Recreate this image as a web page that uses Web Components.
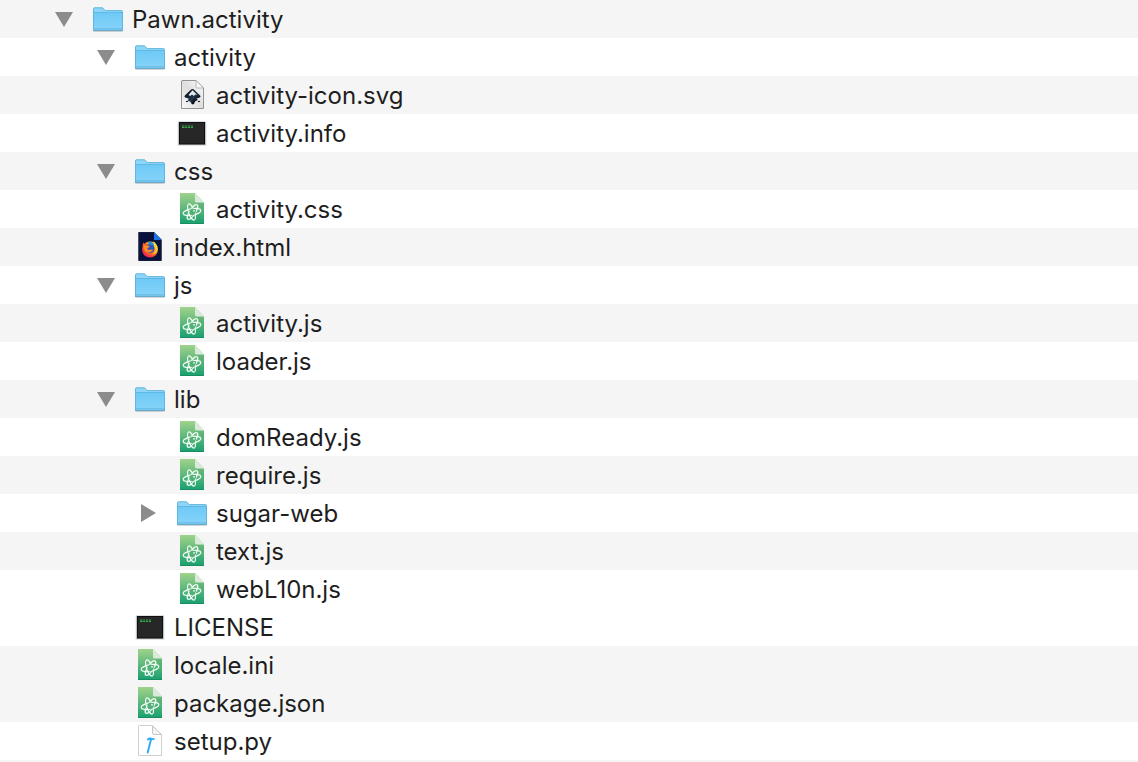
<!DOCTYPE html>
<html lang="en">
<head>
<meta charset="utf-8">
<meta name="viewport" content="width=device-width, initial-scale=1">
<title>Pawn.activity</title>
<style>
  html, body { margin: 0; background: #fff; }
  body { font-family: Inter, "Open Sans", "Liberation Sans", sans-serif; color: #1e1e1e; }
</style>
</head>
<body>
<file-tree>
  <tree-row level="0" kind="folder" state="open" shaded>Pawn.activity</tree-row>
  <tree-row level="1" kind="folder" state="open">activity</tree-row>
  <tree-row level="2" kind="inkscape" shaded>activity-icon.svg</tree-row>
  <tree-row level="2" kind="exec">activity.info</tree-row>
  <tree-row level="1" kind="folder" state="open" shaded>css</tree-row>
  <tree-row level="2" kind="atom">activity.css</tree-row>
  <tree-row level="1" kind="firefox" shaded>index.html</tree-row>
  <tree-row level="1" kind="folder" state="open">js</tree-row>
  <tree-row level="2" kind="atom" shaded>activity.js</tree-row>
  <tree-row level="2" kind="atom">loader.js</tree-row>
  <tree-row level="1" kind="folder" state="open" shaded>lib</tree-row>
  <tree-row level="2" kind="atom">domReady.js</tree-row>
  <tree-row level="2" kind="atom" shaded>require.js</tree-row>
  <tree-row level="2" kind="folder" state="closed">sugar-web</tree-row>
  <tree-row level="2" kind="atom" shaded>text.js</tree-row>
  <tree-row level="2" kind="atom">webL10n.js</tree-row>
  <tree-row level="1" kind="exec">LICENSE</tree-row>
  <tree-row level="1" kind="atom" shaded>locale.ini</tree-row>
  <tree-row level="1" kind="atom" shaded>package.json</tree-row>
  <tree-row level="1" kind="script">setup.py</tree-row>
</file-tree>

<script>
const ICONS = {
  folder: `
    <defs><linearGradient id="f" x1="0" y1="0" x2="0" y2="1"><stop offset="0" stop-color="#6fcaf6"/><stop offset="1" stop-color="#83d2f9"/></linearGradient></defs>
    <path d="M1.5 31.5h29" stroke="#000" stroke-opacity=".16"/>
    <path d="M1.5 30V8.8q0-1 1-1H10q.8 0 1.300.6l1.200 1.700q.4.500 1.200.500H29.500q1 0 1 1V30z" fill="#8fd5f7" stroke="#62b5dd"/>
    <path d="M2 13h28v15H2z" fill="url(#f)"/>
    <path d="M2 12.500h28" stroke="#5fb9e6"/>
    <path d="M2 28.500h28" stroke="#6cc0e9"/>
    <path d="M1 30.500h30" stroke="#65abd0"/>`,
  atom: `
    <defs><linearGradient id="a" x1="0" y1="0" x2="0" y2="1"><stop offset="0" stop-color="#9fd38b"/><stop offset=".5" stop-color="#5eb87b"/><stop offset="1" stop-color="#16a070"/></linearGradient></defs>
    <path d="M4 3h15l9 9.500V34H4z" fill="url(#a)"/>
    <path d="M4 33.500h24" stroke="#1b8b62"/>
    <path d="M19 12.500h9V21z" fill="#2a8055" opacity=".15"/>
    <path d="M19 3l9 9.500h-7.500q-1.500 0-1.500-1.500z" fill="#d9eadb"/>
    <g fill="none" stroke="#f2fbf5" stroke-width="1.200">
      <ellipse cx="16" cy="22" rx="9" ry="3.200" transform="rotate(-10 16 22)"/>
      <ellipse cx="15.500" cy="22" rx="8.500" ry="2.900" transform="rotate(70 15.500 22)"/>
      <ellipse cx="16.500" cy="22" rx="8.500" ry="2.900" transform="rotate(122 16.500 22)"/>
    </g>
    <path d="M13.500 20l2.500-1.500 3 .7 1 2.300-1.500 3-2.500 1-2.500-2z" fill="#52b077"/>
    <circle cx="18" cy="20.800" r=".9" fill="#f2fbf5"/>`,
  inkscape: `
    <defs><linearGradient id="p" x1="1" y1="0" x2="0" y2="1"><stop offset="0" stop-color="#fff"/><stop offset=".5" stop-color="#dedede"/><stop offset="1" stop-color="#f8f8f8"/></linearGradient>
    <linearGradient id="m" x1="0" y1="0" x2="1" y2="1"><stop offset="0" stop-color="#000"/><stop offset=".55" stop-color="#203650"/><stop offset=".8" stop-color="#000"/></linearGradient></defs>
    <path d="M6 4.500h14l7.500 7.500v20.500H5.500V5z" fill="url(#p)" stroke="#929292"/>
    <path d="M20 4.500V11q0 1 1 1h6.500z" fill="#fafafa" stroke="#a8a8a8" stroke-width=".8"/>
    <path d="M16.500 13q.9 0 1.600.7l6 5.800q1.200 1.300-.5 2l-3 .9q-.7.500.5.900 1.600.6-.2 1.300-1.800.3-2.100 1.500-.4 2.200-2 2.300-1.600-.1-2-2.200-.3-1.100-2.300-1.300-1.800-.6-.3-1.200 1.200-.6.100-1.100l-3-1q-1.600-.7-.4-2l6-5.900q.7-.7 1.600-.7z" fill="url(#m)"/>
    <path d="M16.500 14.200l4.500 4.600-1.900-.3-1.300 1.400-1.800-1.400-1.800 1.400-1.700-.8z" fill="#e8edf3"/>
    <path d="M10 25.500h2M22 25.500h2" stroke="#151515"/>`,
  exec: `
    <rect x="1.500" y="8" width="29" height="24" rx="1" fill="#000" opacity=".1"/>
    <rect x="2" y="7.500" width="28" height="23.500" fill="#b9c4c4"/>
    <rect x="3" y="8" width="26" height="22.500" fill="#101010"/>
    <rect x="4" y="9" width="24" height="20.500" fill="#272727"/>
    <path d="M6 12h2.500M6 13.500h2.500M9.200 12h2M9.200 13.500h2M12 12h2.200M12 13.500h2.200M15 12h2M15 13.500h2" fill="none" stroke="#36ad49" stroke-width="1.100"/>`,
  firefox: `
    <defs><radialGradient id="o" cx=".8" cy=".15" r="1"><stop offset="0" stop-color="#fff44f"/><stop offset=".3" stop-color="#ffbd1e"/><stop offset=".6" stop-color="#ff6d1e"/><stop offset="1" stop-color="#e8175c"/></radialGradient></defs>
    <path d="M4.500 4H20l7.500 7.500V33h-23z" fill="#07113b" />
    <path d="M5 4.500h14.500M5 4.500v28h22V12" fill="none" stroke="#171c37"/>
    <path d="M20 4l7.500 8H20z" fill="#1a76e8"/>
    <circle cx="16" cy="21.500" r="8" fill="url(#o)"/>
    <path d="M8.500 18l.6-3.500 2 1.800 2-.3-2 5z" fill="#f4512c"/>
    <circle cx="16" cy="20.500" r="4.600" fill="#3553b7"/>
    <path d="M14 14q3-.8 5 1l1.700 3-3.200-1.200-2.500-.3z" fill="#198fe2"/>
    <path d="M9.500 17.500q1.500-1 3.500 0l2.500.4-.7 1.600-1.700 1q.5 1.700 2.400 1.600l2.500-.7q1.300.2.600 1.100-2.600 3-6 1.700-3.500-2.200-3.100-6.700z" fill="#ff8a1d"/>
    <path d="M19 14q4 2.500 3 7.500-1 4-4.500 5 5-.1 6-5 .4-4-2.500-6.500l-1-1.500z" fill="#ffd72e"/>`,
  script: `
    <path d="M5 4h14l8.500 8.500V34h-23V4.500z" fill="#000" opacity=".07"/>
    <path d="M5.500 3.500H18.500l9 9v21h-23v-29q0-1 1-1z" fill="#fff" stroke="#cfcfcf"/>
    <path d="M18.500 4v7q0 1.500 1.500 1.500h7.500z" fill="#f5f5f5" stroke="#c8c8c8"/>
    <path d="M12.800 17q2-2 4.500-1.300l3.200.5.200 1.900-4.700-.2q-1.700-.1-2.800.6z" fill="#3aaef5"/>
    <path d="M17 17.500L13.700 30.500" stroke="#28aafa" stroke-width="1.900" stroke-linecap="round"/>`
};

class FileIcon extends HTMLElement {
  connectedCallback() {
    this.attachShadow({ mode: "open" }).innerHTML = `
      <style>
        :host { display: block; flex: none; width: 32px; height: 38px; }
        svg { display: block; width: 100%; height: 100%; }
      </style>
      <svg viewBox="0 0 32 38" aria-hidden="true">${ICONS[this.getAttribute("kind")]}</svg>`;
  }
}

class DisclosureButton extends HTMLElement {
  connectedCallback() {
    const open = this.getAttribute("state") === "open";
    this.attachShadow({ mode: "open" }).innerHTML = `
      <style>
        :host { display: block; }
        button { display: block; width: 20px; height: 38px; padding: 0; border: 0; background: none; }
        svg { display: block; width: 20px; height: 38px; fill: #8c8c8c; }
      </style>
      <button type="button" aria-label="${open ? "Collapse" : "Expand"}" aria-expanded="${open}">
        <svg viewBox="0 0 20 38" aria-hidden="true"><path d="${open ? "M1 12h18l-9 15z" : "M3 10l15 9-15 9z"}"/></svg>
      </button>`;
  }
}

class TreeRow extends HTMLElement {
  connectedCallback() {
    const state = this.getAttribute("state");
    const level = Number(this.getAttribute("level"));
    this.setAttribute("role", "treeitem");
    this.setAttribute("aria-level", level + 1);
    this.style.setProperty("--level", level);
    this.attachShadow({ mode: "open" }).innerHTML = `
      <style>
        :host { display: flex; align-items: flex-start; height: 38px; padding-left: calc(54px + 42px * var(--level)); background: #fff; }
        :host([shaded]) { background: #f5f5f5; }
        .toggle { flex: none; width: 20px; margin-right: 18px; }
        .label { margin-left: 8px; font-size: 24px; line-height: 40px; white-space: nowrap; }
      </style>
      <span class="toggle">${state ? `<disclosure-button state="${state}"></disclosure-button>` : ""}</span>
      <file-icon kind="${this.getAttribute("kind")}"></file-icon>
      <span class="label"><slot></slot></span>`;
  }
}

class FileTree extends HTMLElement {
  connectedCallback() {
    this.setAttribute("role", "tree");
    this.attachShadow({ mode: "open" }).innerHTML = `
      <style>
        :host { display: flex; flex-direction: column; min-height: 100vh; }
        .rest { flex: 1; min-height: 2px; background: #f5f5f5; }
      </style>
      <slot></slot>
      <div class="rest"></div>`;
  }
}

customElements.define("file-icon", FileIcon);
customElements.define("disclosure-button", DisclosureButton);
customElements.define("tree-row", TreeRow);
customElements.define("file-tree", FileTree);
</script>
</body>
</html>
